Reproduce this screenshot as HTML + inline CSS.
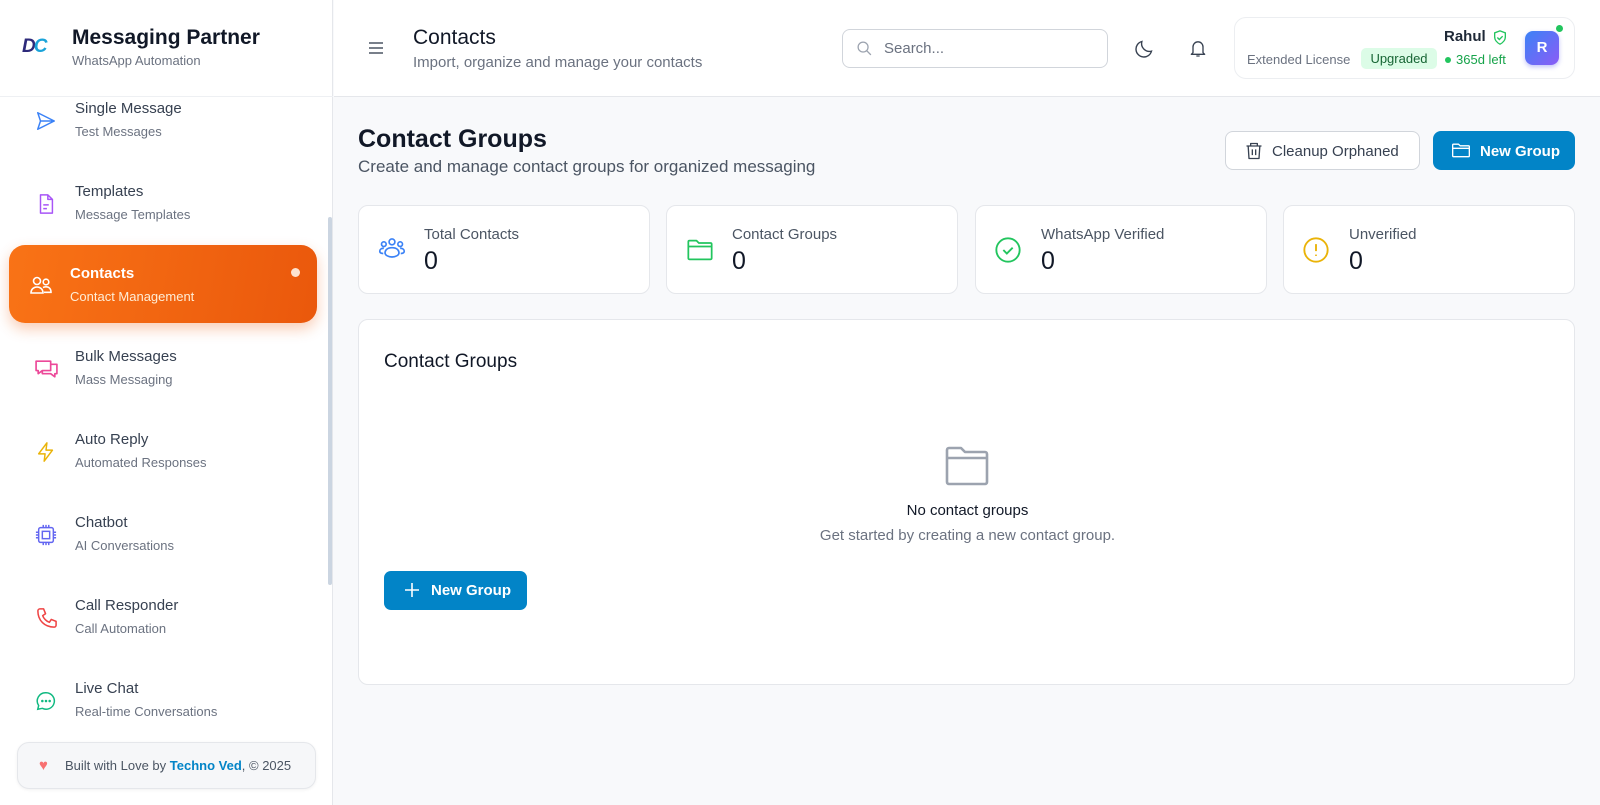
<!DOCTYPE html>
<html><head><meta charset="utf-8">
<style>
*{box-sizing:border-box;margin:0;padding:0}
body{width:1600px;height:805px;overflow:hidden;font-family:"Liberation Sans",sans-serif;background:#f8f9fb;position:relative;color:#111827}
.abs{position:absolute}
svg{display:block}
.side{left:0;top:0;width:333px;height:805px;background:#fff;border-right:1px solid #e5e7eb}
.item{position:absolute;left:9px;width:308px;height:78px}
.item .ic{position:absolute;left:26px;top:28px}
.item .t{position:absolute;left:66px;top:18px;font-size:15px;color:#374151}
.item .s{position:absolute;left:66px;top:42px;font-size:13px;color:#6b7280}
.card{background:#fff;border:1px solid #e5e7eb;border-radius:10px}
.stat .ic{position:absolute;left:18px;top:30px}
.stat .l{position:absolute;left:65px;top:20px;font-size:15px;color:#4b5563}
.stat .v{position:absolute;left:65px;top:41px;font-size:25px;color:#111827}
</style></head><body>
<div class="abs side">
  <div class="abs" style="left:0;top:96px;width:333px;height:1px;background:#eef0f3"></div>
  <div class="abs" style="left:22px;top:36px;font-weight:bold;font-style:italic;font-size:19px;letter-spacing:-2px;color:#2d2a7a">D<span style="color:#1ba3d9">C</span></div>
  <div class="abs" style="left:72px;top:26px;font-size:21px;font-weight:bold;color:#111827">Messaging Partner</div>
  <div class="abs" style="left:72px;top:53px;font-size:13px;color:#6b7280">WhatsApp Automation</div>

  <div class="item" style="top:82px"><svg class="ic" width="22" height="22" viewBox="0 0 24 24" fill="none" stroke="#3b82f6" stroke-width="1.6" stroke-linejoin="round"><path d="M3 3l18 9-18 9 3-9z M6 12h15"/></svg><div class="t">Single Message</div><div class="s">Test Messages</div></div>
  <div class="item" style="top:165px"><svg class="ic" width="22" height="22" viewBox="0 0 24 24" fill="none" stroke="#a855f7" stroke-width="1.6" stroke-linejoin="round"><path d="M6 2h8l5 5v15H6z M14 2v5h5 M9 13h6 M9 17h4"/></svg><div class="t">Templates</div><div class="s">Message Templates</div></div>
  <div class="item" style="top:245px;height:78px;border-radius:16px;background:linear-gradient(100deg,#f97316,#ea580c);box-shadow:0 6px 14px rgba(234,88,12,.3)">
    <svg class="ic" style="left:20px;top:28px" width="24" height="24" viewBox="0 0 24 24" fill="none" stroke="#fff" stroke-width="1.6"><circle cx="8" cy="8" r="3.5"/><circle cx="17" cy="9" r="2.8"/><path d="M2 20c0-4 3-6 6-6s6 2 6 6z M14 14.5c1-.5 2-.7 3-.7 3 0 5 2 5 5.5h-7"/></svg>
    <div class="t" style="left:61px;top:20px;color:#fff;font-weight:bold;font-size:15px">Contacts</div>
    <div class="s" style="left:61px;top:44px;color:#ffedd5">Contact Management</div>
    <div class="abs" style="left:282px;top:23px;width:9px;height:9px;border-radius:50%;background:#fde2cf"></div>
  </div>
  <div class="item" style="top:330px"><svg class="ic" style="left:25px;top:27px" width="25" height="25" viewBox="0 0 24 24" fill="none" stroke="#ec4899" stroke-width="1.6" stroke-linejoin="round"><path d="M2 4h14v9H8l-4 3v-3H2z M8 13v3h8l4 3v-3h2V7h-6"/></svg><div class="t">Bulk Messages</div><div class="s">Mass Messaging</div></div>
  <div class="item" style="top:413px"><svg class="ic" width="22" height="22" viewBox="0 0 24 24" fill="none" stroke="#eab308" stroke-width="1.6" stroke-linejoin="round"><path d="M13 2L4 14h7l-1 8 9-12h-7z"/></svg><div class="t">Auto Reply</div><div class="s">Automated Responses</div></div>
  <div class="item" style="top:496px"><svg class="ic" width="22" height="22" viewBox="0 0 24 24" fill="none" stroke="#6366f1" stroke-width="1.6"><rect x="4" y="4" width="16" height="16" rx="2"/><rect x="8" y="8" width="8" height="8"/><path d="M9 1v3M12 1v3M15 1v3M9 20v3M12 20v3M15 20v3M1 9h3M1 12h3M1 15h3M20 9h3M20 12h3M20 15h3"/></svg><div class="t">Chatbot</div><div class="s">AI Conversations</div></div>
  <div class="item" style="top:579px"><svg class="ic" width="23" height="23" viewBox="0 0 24 24" fill="none" stroke="#ef4444" stroke-width="1.6" stroke-linejoin="round"><path d="M5 2h4l2 5-3 2c1 3 4 6 7 7l2-3 5 2v4c0 1-1 2-2 2C10 21 3 14 3 4c0-1 1-2 2-2z"/></svg><div class="t">Call Responder</div><div class="s">Call Automation</div></div>
  <div class="item" style="top:662px"><svg class="ic" width="22" height="22" viewBox="0 0 24 24" fill="none" stroke="#10b981" stroke-width="1.6"><path d="M12 3a9 9 0 1 1-4 17l-5 1 1-4A9 9 0 0 1 12 3z"/><circle cx="8" cy="12" r=".6" fill="#10b981"/><circle cx="12" cy="12" r=".6" fill="#10b981"/><circle cx="16" cy="12" r=".6" fill="#10b981"/></svg><div class="t">Live Chat</div><div class="s">Real-time Conversations</div></div>

  <div class="abs" style="left:328px;top:217px;width:4px;height:368px;border-radius:2px;background:#cbd5e1"></div>
  <div class="abs" style="left:17px;top:742px;width:299px;height:47px;border:1px solid #e5e7eb;border-radius:12px;background:#f6f7f9;box-shadow:0 1px 3px rgba(0,0,0,.06)">
    <div class="abs" style="left:21px;top:14px;color:#f87171;font-size:15px">♥</div>
    <div class="abs" style="left:47px;top:15px;font-size:13px;color:#4b5563">Built with Love by <b style="color:#0284c7">Techno Ved</b>, © 2025</div>
  </div>
</div>

<div class="abs" style="left:334px;top:0;width:1266px;height:97px;background:#fff;border-bottom:1px solid #e5e7eb">
  <svg class="abs" style="left:33px;top:40px" width="18" height="16" viewBox="0 0 18 16" stroke="#4b5563" stroke-width="1.6"><path d="M2 3h14M2 8h14M2 13h14"/></svg>
  <div class="abs" style="left:79px;top:26px;font-size:21px;color:#111827">Contacts</div>
  <div class="abs" style="left:79px;top:54px;font-size:15px;color:#6b7280">Import, organize and manage your contacts</div>
  <div class="abs" style="left:508px;top:29px;width:266px;height:39px;border:1px solid #d1d5db;border-radius:8px">
    <svg class="abs" style="left:13px;top:10px" width="17" height="17" viewBox="0 0 24 24" fill="none" stroke="#9ca3af" stroke-width="1.8"><circle cx="10" cy="10" r="7"/><path d="M15 15l6 6"/></svg>
    <div class="abs" style="left:41px;top:10px;font-size:15px;color:#6b7280">Search...</div>
  </div>
  <svg class="abs" style="left:800px;top:38px" width="21" height="21" viewBox="0 0 24 24" fill="none" stroke="#374151" stroke-width="1.6"><path d="M20 15A9 9 0 0 1 9 4a9 9 0 1 0 11 11z"/></svg>
  <svg class="abs" style="left:854px;top:38px" width="20" height="21" viewBox="0 0 24 24" fill="none" stroke="#374151" stroke-width="1.6" stroke-linejoin="round"><path d="M6 17V10a6 6 0 0 1 12 0v7l2 2H4z M10 21h4"/></svg>
  <div class="abs" style="left:900px;top:17px;width:341px;height:62px;border:1px solid #eceef1;border-radius:12px">
    <div class="abs" style="left:209px;top:10px;font-size:15px;font-weight:bold;color:#1f2937">Rahul</div>
    <svg class="abs" style="left:257px;top:11px" width="16" height="17" viewBox="0 0 24 24" fill="none" stroke="#22c55e" stroke-width="2"><path d="M12 2l8 3v6c0 5-4 9-8 11-4-2-8-6-8-11V5z M8 12l3 3 5-5"/></svg>
    <div class="abs" style="left:12px;top:34px;font-size:13px;color:#6b7280">Extended License</div>
    <div class="abs" style="left:126px;top:30px;width:76px;height:21px;border-radius:5px;background:#dcfce7;color:#166534;font-size:13px;text-align:center;line-height:21px">Upgraded</div>
    <div class="abs" style="left:210px;top:39px;width:6px;height:6px;border-radius:50%;background:#22c55e"></div>
    <div class="abs" style="left:221px;top:34px;font-size:13px;color:#16a34a">365d left</div>
    <div class="abs" style="left:290px;top:13px;width:34px;height:34px;border-radius:8px;background:linear-gradient(135deg,#3b82f6,#8b5cf6);color:#fff;font-weight:bold;font-size:15px;text-align:center;line-height:34px;box-shadow:0 2px 5px rgba(99,102,241,.4)">R</div>
    <div class="abs" style="left:320px;top:6px;width:9px;height:9px;border-radius:50%;background:#22c55e;border:1px solid #fff"></div>
  </div>
</div>

<div class="abs" style="left:358px;top:125px;font-size:25px;font-weight:bold;color:#111827">Contact Groups</div>
<div class="abs" style="left:358px;top:157px;font-size:17px;color:#4b5563">Create and manage contact groups for organized messaging</div>

<div class="abs" style="left:1225px;top:131px;width:195px;height:39px;border:1px solid #d1d5db;border-radius:8px;background:#fff">
  <svg class="abs" style="left:18px;top:9px" width="20" height="20" viewBox="0 0 24 24" fill="none" stroke="#374151" stroke-width="1.6" stroke-linejoin="round"><path d="M3 6h18M8 6V3h8v3M5 6l1 15h12l1-15M10 10v7M14 10v7"/></svg>
  <div class="abs" style="left:46px;top:11px;font-size:15px;color:#374151">Cleanup Orphaned</div>
</div>
<div class="abs" style="left:1433px;top:131px;width:142px;height:39px;border-radius:8px;background:#0284c7">
  <svg class="abs" style="left:18px;top:9px" width="20" height="20" viewBox="0 0 24 24" fill="none" stroke="#fff" stroke-width="1.6" stroke-linejoin="round"><path d="M2 6a1 1 0 0 1 1-1h6l2 2h10a1 1 0 0 1 1 1v11a1 1 0 0 1-1 1H3a1 1 0 0 1-1-1z M2 10h20"/></svg>
  <div class="abs" style="left:47px;top:12px;font-size:15px;font-weight:bold;color:#fff">New Group</div>
</div>

<div class="abs card stat" style="left:358px;top:205px;width:292px;height:89px">
  <svg class="ic" width="30" height="28" viewBox="0 0 24 24" fill="none" stroke="#3b82f6" stroke-width="1.4"><circle cx="12" cy="5" r="2.5"/><circle cx="5" cy="7" r="2"/><circle cx="19" cy="7" r="2"/><path d="M12 10c-4 0-6 2-6 4.5 0 2 3 3.5 6 3.5s6-1.5 6-3.5c0-2.5-2-4.5-6-4.5z M5 10.5c-2 0-3.5 1-3.5 2.5s1.5 2 3 2 M19 10.5c2 0 3.5 1 3.5 2.5s-1.5 2-3 2"/></svg>
  <div class="l">Total Contacts</div><div class="v">0</div>
</div>
<div class="abs card stat" style="left:666px;top:205px;width:292px;height:89px">
  <svg class="ic" width="30" height="28" viewBox="0 0 24 24" fill="none" stroke="#22c55e" stroke-width="1.5" stroke-linejoin="round"><path d="M2 5a1 1 0 0 1 1-1h6l2 2h10a1 1 0 0 1 1 1v12a1 1 0 0 1-1 1H3a1 1 0 0 1-1-1z M2 9h20"/></svg>
  <div class="l">Contact Groups</div><div class="v">0</div>
</div>
<div class="abs card stat" style="left:975px;top:205px;width:292px;height:89px">
  <svg class="ic" width="28" height="28" viewBox="0 0 24 24" fill="none" stroke="#22c55e" stroke-width="1.6"><circle cx="12" cy="12" r="10"/><path d="M8 12l3 3 5-5"/></svg>
  <div class="l">WhatsApp Verified</div><div class="v">0</div>
</div>
<div class="abs card stat" style="left:1283px;top:205px;width:292px;height:89px">
  <svg class="ic" width="28" height="28" viewBox="0 0 24 24" fill="none" stroke="#eab308" stroke-width="1.6"><circle cx="12" cy="12" r="10"/><path d="M12 7v6M12 16v1"/></svg>
  <div class="l">Unverified</div><div class="v">0</div>
</div>

<div class="abs card" style="left:358px;top:319px;width:1217px;height:366px">
  <div class="abs" style="left:25px;top:31px;font-size:19px;color:#111827">Contact Groups</div>
  <svg class="abs" style="left:584px;top:124px" width="48" height="44" viewBox="0 0 24 22" fill="none" stroke="#9ca3af" stroke-width="1.3" stroke-linejoin="round"><path d="M2 3a1 1 0 0 1 1-1h6l2 2h10a1 1 0 0 1 1 1v14a1 1 0 0 1-1 1H3a1 1 0 0 1-1-1z M2 7h20"/></svg>
  <div class="abs" style="left:0;width:1217px;top:182px;text-align:center;font-size:15px;color:#111827">No contact groups</div>
  <div class="abs" style="left:0;width:1217px;top:207px;text-align:center;font-size:15px;color:#6b7280">Get started by creating a new contact group.</div>
  <div class="abs" style="left:25px;top:251px;width:143px;height:39px;border-radius:7px;background:#0284c7">
    <svg class="abs" style="left:20px;top:11px" width="16" height="16" viewBox="0 0 16 16" stroke="#fff" stroke-width="1.6"><path d="M8 1v14M1 8h14"/></svg>
    <div class="abs" style="left:47px;top:11px;font-size:15px;font-weight:bold;color:#fff">New Group</div>
  </div>
</div>
</body></html>
